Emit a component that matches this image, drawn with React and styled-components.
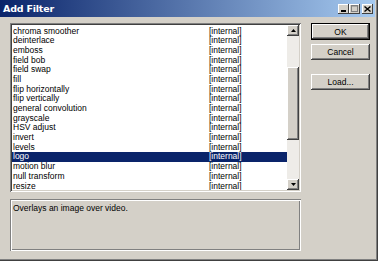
import React from 'react';
import styled, {createGlobalStyle} from 'styled-components';

const FACE = '#d4d0c8';
const FONT = '"Liberation Sans", Arial, sans-serif';

const GlobalStyle = createGlobalStyle`
  html, body {
    margin: 0;
    padding: 0;
    background: ${FACE};
  }
  body {
    font-family: ${FONT};
    font-size: 8.5px;
  }
`;

const filters = [
  'chroma smoother',
  'deinterlace',
  'emboss',
  'field bob',
  'field swap',
  'fill',
  'flip horizontally',
  'flip vertically',
  'general convolution',
  'grayscale',
  'HSV adjust',
  'invert',
  'levels',
  'logo',
  'motion blur',
  'null transform',
  'resize'
];

const SELECTED = 'logo';

const Window = styled.div`
  width: 378px;
  height: 261px;
  box-sizing: border-box;
  background: ${FACE};
  display: flex;
  flex-direction: column;
  padding: 0 3px 3px 0;
  box-shadow: inset -1px -1px #404040, inset -2px -2px #808080;
`;

const TitleBar = styled.div`
  height: 17px;
  display: flex;
  align-items: center;
  padding: 0 2px 0 3px;
  background: linear-gradient(to right, #0a246a, #a6caf0);
`;

const Title = styled.span`
  flex: 1;
  color: #fff;
  font-weight: bold;
  font-size: 9.5px;
  font-family: "DejaVu Sans", ${FONT};
  letter-spacing: -0.2px;
`;

const CaptionButton = styled.div`
  width: 11px;
  height: 10px;
  background: ${FACE};
  display: flex;
  align-items: center;
  justify-content: center;
  margin-left: ${props => (props.$gap ? '2px' : '0')};
  box-shadow: inset -1px -1px #404040, inset 1px 1px #fff;
`;

const Client = styled.div`
  flex: 1;
  display: flex;
  padding: 6px 0 0 10px;
  gap: 10px;
`;

const LeftColumn = styled.div`
  width: 291px;
  display: flex;
  flex-direction: column;
  gap: 7px;
`;

const ListBox = styled.div`
  height: 169px;
  box-sizing: border-box;
  display: flex;
  background: #fff;
  padding: 2px;
  box-shadow: inset 1px 1px #808080, inset -1px -1px #fff,
    inset 2px 2px #404040, inset -2px -2px ${FACE};
`;

const Rows = styled.div`
  flex: 1;
  overflow: hidden;
  padding-top: 1.5px;
`;

const Row = styled.div`
  display: flex;
  height: 9.7px;
  line-height: 9.7px;
  padding-left: 1px;
  white-space: nowrap;
  color: ${props => (props.$selected ? '#fff' : '#000')};
  background: ${props => (props.$selected ? '#0a246a' : 'transparent')};
`;

const NameCell = styled.span`
  width: 196px;
`;

const Scrollbar = styled.div`
  width: 12px;
  display: flex;
  flex-direction: column;
`;

const ArrowButton = styled.div`
  height: 11px;
  background: ${FACE};
  display: flex;
  align-items: center;
  justify-content: center;
  box-shadow: inset -1px -1px #404040, inset 1px 1px #fff,
    inset -2px -2px #808080;
`;

const Track = styled.div`
  flex: ${props => (props.$size ? `0 0 ${props.$size}px` : 1)};
  background-color: #eeece8;
`;

const Thumb = styled.div`
  height: 73px;
  background: ${FACE};
  box-shadow: inset -1px -1px #404040, inset 1px 1px #fff,
    inset -2px -2px #808080;
`;

const Description = styled.div`
  height: 52px;
  box-sizing: border-box;
  padding: 4px 3px;
  color: #000;
  box-shadow: inset 1px 1px #808080, inset -1px -1px #fff,
    inset 2px 2px #fff, inset -2px -2px #808080;
`;

const ButtonColumn = styled.div`
  width: 59px;
  display: flex;
  flex-direction: column;
  gap: 4px;
`;

const Button = styled.div`
  height: ${props => (props.$default ? '17px' : '16px')};
  box-sizing: border-box;
  display: flex;
  align-items: center;
  justify-content: center;
  color: #000;
  background: ${FACE};
  margin-top: ${props => props.$offset || 0}px;
  box-shadow: ${props =>
    props.$default
      ? `inset 0 0 0 1px #000, inset -2px -2px #404040, inset 2px 2px #fff, inset -3px -3px #808080`
      : `inset -1px -1px #404040, inset 1px 1px #fff, inset -2px -2px #808080`};
`;

const Arrow = ({up}) => (
  <svg width="5" height="3" viewBox="0 0 5 3">
    <polygon points={up ? '2.5,0 5,3 0,3' : '0,0 5,0 2.5,3'} fill="#000" />
  </svg>
);

const App = () => (
  <>
    <GlobalStyle />
    <Window>
      <TitleBar>
        <Title>Add Filter</Title>
        <CaptionButton>
          <svg width="7" height="7" viewBox="0 0 7 7">
            <rect x="1" y="5" width="5" height="2" fill="#000" />
          </svg>
        </CaptionButton>
        <CaptionButton>
          <svg width="7" height="7" viewBox="0 0 7 7">
            <rect x="0.5" y="0.5" width="6" height="6" fill="none" stroke="#808080" />
            <rect x="0" y="0" width="7" height="1.5" fill="#808080" />
          </svg>
        </CaptionButton>
        <CaptionButton $gap>
          <svg width="7" height="6" viewBox="0 0 7 6">
            <path d="M0.5 0.5 L6.5 5.5 M6.5 0.5 L0.5 5.5" stroke="#000" strokeWidth="1.4" />
          </svg>
        </CaptionButton>
      </TitleBar>
      <Client>
        <LeftColumn>
          <ListBox>
            <Rows>
              {filters.map(name => (
                <Row key={name} $selected={name === SELECTED}>
                  <NameCell>{name}</NameCell>
                  <span>[internal]</span>
                </Row>
              ))}
            </Rows>
            <Scrollbar>
              <ArrowButton>
                <Arrow up />
              </ArrowButton>
              <Track $size={31} />
              <Thumb />
              <Track />
              <ArrowButton>
                <Arrow />
              </ArrowButton>
            </Scrollbar>
          </ListBox>
          <Description>Overlays an image over video.</Description>
        </LeftColumn>
        <ButtonColumn>
          <Button $default>OK</Button>
          <Button>Cancel</Button>
          <Button $offset={10}>Load...</Button>
        </ButtonColumn>
      </Client>
    </Window>
  </>
);

export default App;
